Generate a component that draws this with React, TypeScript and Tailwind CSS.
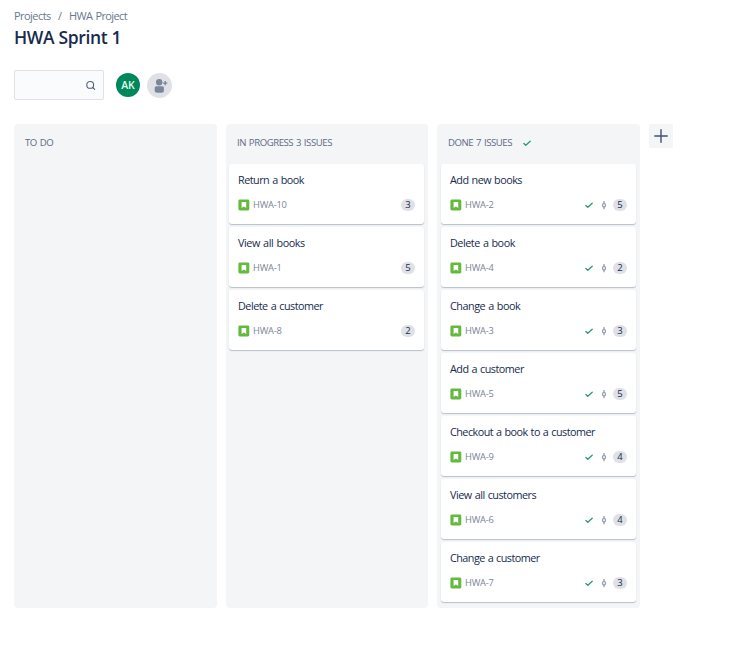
import React from 'react';

type Issue = { title: string; id: string; points: number; titleClass: string };

const inProgress: Issue[] = [
  { title: 'Return a book', id: 'HWA-10', points: 3, titleClass: 'tracking-[-0.5px]' },
  { title: 'View all books', id: 'HWA-1', points: 5, titleClass: 'tracking-[-0.4px]' },
  { title: 'Delete a customer', id: 'HWA-8', points: 2, titleClass: 'tracking-[-0.49px]' },
];

const done: Issue[] = [
  { title: 'Add new books', id: 'HWA-2', points: 5, titleClass: 'tracking-[-0.5px]' },
  { title: 'Delete a book', id: 'HWA-4', points: 2, titleClass: 'tracking-[-0.46px]' },
  { title: 'Change a book', id: 'HWA-3', points: 3, titleClass: 'tracking-[-0.46px]' },
  { title: 'Add a customer', id: 'HWA-5', points: 5, titleClass: 'tracking-[-0.5px]' },
  { title: 'Checkout a book to a customer', id: 'HWA-9', points: 4, titleClass: 'tracking-[-0.53px]' },
  { title: 'View all customers', id: 'HWA-6', points: 4, titleClass: 'tracking-[-0.49px]' },
  { title: 'Change a customer', id: 'HWA-7', points: 3, titleClass: 'tracking-[-0.54px]' },
];

function Check() {
  return (
    <svg width="8" height="8" viewBox="0 0 8 8" fill="none" className="block shrink-0">
      <path d="M0.9 4.5L2.8 6.3L7.2 2.3" stroke="#2a9a73" strokeWidth="1.3" strokeLinecap="round" strokeLinejoin="round" />
    </svg>
  );
}

function Commit() {
  return (
    <svg width="6" height="10" viewBox="0 0 6 10" fill="none" className="block shrink-0">
      <path d="M3 1V3.3M3 7.1V9.2" stroke="#97a0af" strokeWidth="1.3" />
      <ellipse cx="3" cy="5.2" rx="1.5" ry="1.8" stroke="#97a0af" strokeWidth="1.3" />
    </svg>
  );
}

function StoryIcon() {
  return (
    <svg width="12" height="12" viewBox="0 0 12 12" className="block shrink-0">
      <rect x="0.4" y="0.6" width="10.9" height="10.9" rx="1.4" fill="#63ba3c" />
      <path d="M3.6 3H8.2V9L5.9 7.5L3.6 9Z" fill="#fff" />
    </svg>
  );
}

function Card({ issue, isDone }: { issue: Issue; isDone?: boolean }) {
  return (
    <article className="flex h-[60px] flex-col rounded-[3px] bg-white px-[9px] shadow-[0_1px_1px_rgba(9,30,66,0.25)]">
      <h3 className={`mt-[8px] h-4 whitespace-nowrap text-[10.8px] leading-4 text-[#172b4d] [word-spacing:0.7px] ${issue.titleClass}`}>{issue.title}</h3>
      <div className="mt-[10px] flex h-[13px] items-center">
        <StoryIcon />
        <span className="ml-[3px] text-[9.3px] leading-[13px] font-medium tracking-[-0.2px] text-[#7a8496]">{issue.id}</span>
        <div className="ml-auto flex items-center">
          {isDone && (
            <div className="mr-[6px] flex items-center gap-[8px]">
              <Check />
              <Commit />
            </div>
          )}
          <span className="flex h-3 w-[14px] items-center justify-center rounded-full bg-[#dfe1e6] text-[9.5px] leading-3 text-[#172b4d]">{issue.points}</span>
        </div>
      </div>
    </article>
  );
}

function Column({ title, issues, isDone }: { title: string; issues: Issue[]; isDone?: boolean }) {
  return (
    <section className="h-[484px] rounded-[4px] bg-[#f4f5f7]">
      <header className="flex h-10 items-center pb-[2px] pl-[11px] text-[9.6px] leading-[14px] font-medium tracking-[-0.45px] text-[#5e6c84] [word-spacing:0.8px]">
        <h2 className="whitespace-nowrap">{title}</h2>
        {isDone && <div className="ml-[11px]"><Check /></div>}
      </header>
      <div className={isDone ? 'flex flex-col gap-[3px] px-[4px]' : 'flex flex-col gap-[3px] pr-[4px] pl-[3px]'}>
        {issues.map((issue) => (
          <Card key={issue.id} issue={issue} isDone={isDone} />
        ))}
      </div>
    </section>
  );
}

export default function App() {
  return (
    <main className="h-[664px] w-[734px] overflow-hidden bg-white pl-[14px] font-['Open_Sans','Noto_Sans',sans-serif]">
      <nav className="flex h-[24px] items-end text-[11px] leading-4 text-[#6b778c]">
        <span className="w-[43px] whitespace-nowrap tracking-[-0.55px]">Projects</span>
        <span className="w-[12px] pl-px">/</span>
        <span className="whitespace-nowrap tracking-[-0.6px] [word-spacing:0.7px]">HWA Project</span>
      </nav>
      <h1 className="h-6 pt-px text-[17.5px] leading-6 font-[560] tracking-[-0.35px] whitespace-nowrap text-[#172b4d]">HWA Sprint 1</h1>
      <div className="mt-[22px] flex h-[30px] items-center">
        <div className="flex h-[30px] w-[90px] items-center justify-end rounded-[2px] border border-[#dfe1e6] bg-[#fafbfc] pr-[7px]">
          <svg width="11" height="11" viewBox="0 0 11 11" fill="none" stroke="#505f79" strokeWidth="1.1" strokeLinecap="round">
            <circle cx="5.2" cy="4.9" r="3.4" />
            <path d="M7.8 7.5L9.7 9.3" />
          </svg>
        </div>
        <div className="ml-3 flex size-6 items-center justify-center rounded-full bg-[#00875a] pt-px text-[10.5px] font-semibold text-[#e3fcef]">AK</div>
        <div className="ml-[7px] flex size-[25px] items-center justify-center rounded-full bg-[#dfe1e6]">
          <svg width="25" height="25" viewBox="0 0 25 25" fill="#7a869a">
            <circle cx="12.2" cy="9.2" r="3.2" />
            <path d="M7.7 14.8Q7.7 13.2 9.3 13.2H15.3Q16.9 13.2 16.9 14.8V18Q16.9 19.8 14.5 19.8H10.1Q7.7 19.8 7.7 18Z" />
            <path d="M18.2 8V12.2M16.1 10.1H20.3" stroke="#7a869a" strokeWidth="1.4" />
          </svg>
        </div>
      </div>
      <div className="mt-6 grid grid-cols-[203px_202px_203px_24px] gap-[9px]">
        <Column title="TO DO" issues={[]} />
        <Column title="IN PROGRESS 3 ISSUES" issues={inProgress} />
        <Column title="DONE 7 ISSUES" issues={done} isDone />
        <button className="flex size-6 items-center justify-center rounded-[2px] bg-[#f4f5f7]">
          <svg width="14" height="14" viewBox="0 0 14 14" stroke="#42526e" strokeWidth="1.4" strokeLinecap="round">
            <path d="M7 0.8V13.2M0.8 7H13.2" />
          </svg>
        </button>
      </div>
    </main>
  );
}
